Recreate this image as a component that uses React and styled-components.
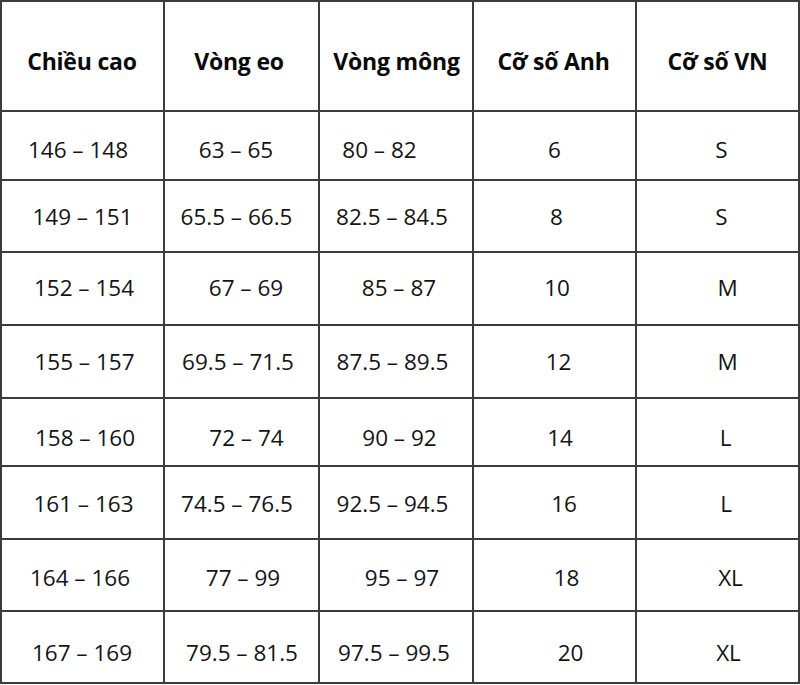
import React from "react";
import styled, { createGlobalStyle } from "styled-components";

const GlobalStyle = createGlobalStyle`
  html, body {
    margin: 0;
    padding: 0;
    background: #fff;
  }
  body {
    font-family: "Open Sans", "Noto Sans", sans-serif;
    color: #111;
  }
`;

const Sheet = styled.div`
  width: 800px;
  height: 685px;
  background: #fff;
`;

const Grid = styled.div`
  display: grid;
  grid-template-columns: 161px 153px 152px 161px 161px;
  grid-template-rows: 108px 67px 70px 71px 71px 66px 71px 70px 70px;
  gap: 2px;
  padding: 2px;
  width: 800px;
  box-sizing: border-box;
  background: #3c3c3c;
`;

// dx / dy nudge the text off centre, the way the printed chart has it
const Cell = styled.div`
  display: flex;
  align-items: center;
  justify-content: center;
  background: #fff;
  white-space: nowrap;
  font-size: ${(p) => (p.$head ? "23px" : "22.5px")};
  font-weight: ${(p) => (p.$head ? 700 : 400)};
  color: ${(p) => (p.$head ? "#0a0a0a" : "#141414")};
  letter-spacing: ${(p) => (p.$head ? "-0.2px" : "0")};
  padding-left: ${(p) => Math.max(0, p.$dx * 2)}px;
  padding-right: ${(p) => Math.max(0, -p.$dx * 2)}px;
  padding-top: ${(p) => Math.max(0, p.$dy * 2)}px;
  padding-bottom: ${(p) => Math.max(0, -p.$dy * 2)}px;
`;

const header = {
  dy: 5,
  cells: [
    ["Chiều cao", -0.5],
    ["Vòng eo", -2.5],
    ["Vòng mông", 0.5],
    ["Cỡ số Anh", -1],
    ["Cỡ số VN", 0],
  ],
};

const rows = [
  { dy: 4, cells: [["146 – 148", -4.5], ["63 – 65", -5.5], ["80 – 82", -16.5], ["6", 0], ["S", 4]] },
  { dy: 0, cells: [["149 – 151", 0], ["65.5 – 66.5", -5], ["82.5 – 84.5", -4], ["8", 2], ["S", 4]] },
  { dy: -1, cells: [["152 – 154", 1.5], ["67 – 69", 4.5], ["85 – 87", 3], ["10", 2.5], ["M", 10]] },
  { dy: 0, cells: [["155 – 157", 2], ["69.5 – 71.5", -3.5], ["87.5 – 89.5", -3.5], ["12", 4], ["M", 10]] },
  { dy: 5, cells: [["158 – 160", 2.5], ["72 – 74", 5], ["90 – 92", 3.5], ["14", 5.5], ["L", 8]] },
  { dy: 1, cells: [["161 – 163", 1], ["74.5 – 76.5", -4.5], ["92.5 – 94.5", -3.5], ["16", 9.5], ["L", 8.5]] },
  { dy: 2, cells: [["164 – 166", -2.5], ["77 – 99", 1.5], ["95 – 97", 6], ["18", 12], ["XL", 13]] },
  { dy: 5, cells: [["167 – 169", -0.5], ["79.5 – 81.5", 0.5], ["97.5 – 99.5", -2], ["20", 16], ["XL", 11]] },
];

export default function App() {
  return (
    <>
      <GlobalStyle />
      <Sheet>
        <Grid>
          {header.cells.map(([text, dx]) => (
            <Cell key={text} $head $dx={dx} $dy={header.dy}>
              {text}
            </Cell>
          ))}
          {rows.map((row, r) =>
            row.cells.map(([text, dx], c) => (
              <Cell key={`${r}-${c}`} $dx={dx} $dy={row.dy}>
                {text}
              </Cell>
            ))
          )}
        </Grid>
      </Sheet>
    </>
  );
}
